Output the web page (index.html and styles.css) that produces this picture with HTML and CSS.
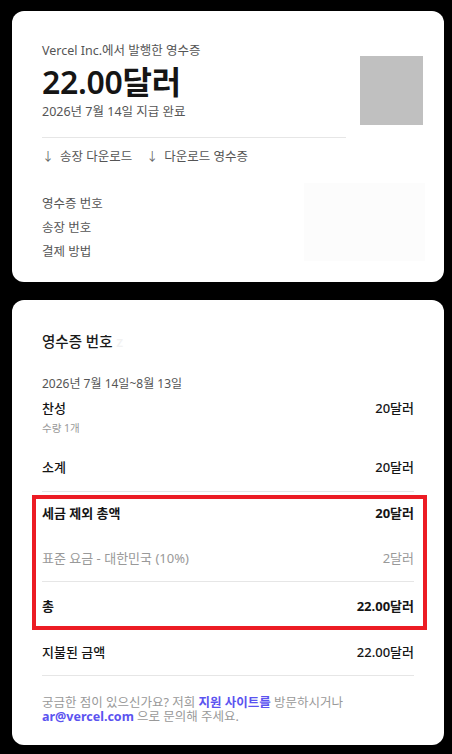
FILE: index.html
```html
<!doctype html>
<html lang="ko">
	<head>
		<meta charset="utf-8">
		<title>영수증</title>
		<link rel="stylesheet" href="styles.css">
	</head>
	<body>
		<div class="card summary">
			<div class="head">
				<div class="head-main">
					<div class="issuer">Vercel Inc.에서 발행한 영수증</div>
					<div class="amount">22.00달러</div>
					<div class="paid">2026년 7월 14일 지급 완료</div>
				</div>
				<div class="logo"></div>
			</div>
			<div class="downloads">
				<span class="dl"><span class="arrow">↓</span>송장 다운로드</span>
				<span class="dl"><span class="arrow">↓</span>다운로드 영수증</span>
			</div>
			<div class="info">
				<div class="labels">
					<div>영수증 번호</div>
					<div>송장 번호</div>
					<div>결제 방법</div>
				</div>
				<div class="redacted"></div>
			</div>
		</div>

		<div class="card details">
			<h2 class="title">영수증 번호 <span class="ghost">z</span></h2>
			<div class="period">2026년 7월 14일~8월 13일</div>
			<div class="line item">
				<span>찬성</span><span>20달러</span>
			</div>
			<div class="qty">수량 1개</div>
			<div class="line sub">
				<span>소계</span><span>20달러</span>
			</div>
			<div class="marked">
				<div class="line strong">
					<span>세금 제외 총액</span><span>20달러</span>
				</div>
				<div class="line tax">
					<span>표준 요금 - 대한민국 (10%)</span><span>2달러</span>
				</div>
				<div class="line strong total">
					<span>총</span><span>22.00달러</span>
				</div>
			</div>
			<div class="line paidline">
				<span>지불된 금액</span><span>22.00달러</span>
			</div>
			<p class="help">궁금한 점이 있으신가요? 저희 <a href="#">지원 사이트를</a> 방문하시거나 <a href="#">ar@vercel.com</a> 으로 문의해 주세요.</p>
		</div>
	</body>
</html>
```

FILE: styles.css
```css
body {
	margin: 0;
	background: #000;
	padding: 11px 8px 10px 12px;
	font-family: "Noto Sans", "Noto Sans CJK KR", sans-serif;
	color: #1a1a1a;
}

.card {
	background: #fff;
	border-radius: 12px;
	width: 432px;
	box-sizing: border-box;
	padding: 0 30px;
}

/* first card */
.summary { height: 271px; padding-top: 31px; }

.head { display: flex; gap: 14px; }
.head-main { flex: none; width: 304px; border-bottom: 1px solid #e6e6e6; padding-bottom: 16px; }
.issuer { font-size: 12.5px; color: #555; line-height: 18px; }
.amount { font-size: 32px; font-weight: 600; line-height: 43px; letter-spacing: -0.3px; color: #151515; }
.paid { font-size: 12.5px; color: #555; line-height: 18px; }
.logo { flex: none; width: 63px; height: 69px; background: #c0c0c0; margin-top: 14px; }

.downloads { display: flex; gap: 14px; font-size: 12.5px; color: #555; margin-top: 10px; line-height: 18px; }
.arrow { margin-right: 6px; font-size: 12px; color: #666; }

.info { display: flex; justify-content: space-between; margin-top: 23px; }
.labels { font-size: 12.5px; color: #555; line-height: 24px; padding-top: 3px; }
.redacted { width: 121px; height: 78px; background: #fcfcfc; margin-right: -11px; margin-top: -6px; }

/* second card */
.details { margin-top: 18px; padding-top: 31px; padding-bottom: 21px; }
.title { margin: 0; font-size: 14.5px; font-weight: 500; line-height: 20px; color: #1a1a1a; }
.ghost { color: #f2f2f2; }
.period { font-size: 12px; color: #555; margin-top: 24px; line-height: 18px; }

.line { display: flex; justify-content: space-between; font-size: 13px; font-weight: 500; line-height: 20px; color: #151515; }
.item { margin-top: 5px; }
.qty { font-size: 10.5px; color: #999; line-height: 16px; margin-top: 2px; }
.sub { margin-top: 21px; padding-bottom: 14px; border-bottom: 1px solid #e6e6e6; }

.marked {
	margin: 3px -13px 0 -10px;
	border: 4px solid #ec1c24;
	padding: 4px 9px 10px 6px;
}
.strong { font-weight: 700; }
.tax { color: #999; font-weight: 400; margin-top: 25px; padding-bottom: 13px; border-bottom: 1px solid #e6e6e6; }
.total { margin-top: 14px; }

.paidline { margin-top: 12px; padding-bottom: 13px; border-bottom: 1px solid #e6e6e6; }

.help { margin: 20px 0 0; font-size: 12.5px; line-height: 14px; color: #999; }
.help a { color: #5b53f0; font-weight: 700; text-decoration: none; }
```
